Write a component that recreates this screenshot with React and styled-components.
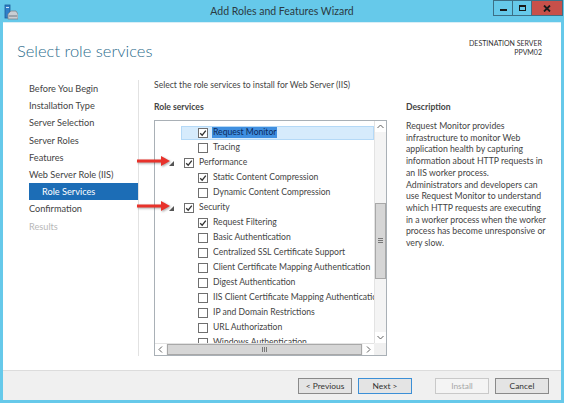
import styled, { createGlobalStyle } from "styled-components";

const GlobalStyle = createGlobalStyle`
  html, body { margin: 0; padding: 0; }
  body {
    width: 564px;
    height: 403px;
    overflow: hidden;
    background: #66c9ea;
    font-family: Lato, "Open Sans", sans-serif;
  }
`;

const steps = [
  { label: "Before You Begin" },
  { label: "Installation Type" },
  { label: "Server Selection" },
  { label: "Server Roles" },
  { label: "Features" },
  { label: "Web Server Role (IIS)" },
  { label: "Role Services", active: true, sub: true },
  { label: "Confirmation" },
  { label: "Results", disabled: true },
];

const services = [
  { label: "Request Monitor", level: 2, checked: true, selected: true },
  { label: "Tracing", level: 2 },
  { label: "Performance", level: 1, checked: true, parent: true },
  { label: "Static Content Compression", level: 2, checked: true },
  { label: "Dynamic Content Compression", level: 2 },
  { label: "Security", level: 1, checked: true, parent: true },
  { label: "Request Filtering", level: 2, checked: true },
  { label: "Basic Authentication", level: 2 },
  { label: "Centralized SSL Certificate Support", level: 2 },
  { label: "Client Certificate Mapping Authentication", level: 2 },
  { label: "Digest Authentication", level: 2 },
  { label: "IIS Client Certificate Mapping Authentication", level: 2 },
  { label: "IP and Domain Restrictions", level: 2 },
  { label: "URL Authorization", level: 2 },
  { label: "Windows Authentication", level: 2 },
];

// description is laid out the way the dialog wraps it
const description = [
  "Request Monitor provides",
  "infrastructure to monitor Web",
  "application health by capturing",
  "information about HTTP requests in",
  "an IIS worker process.",
  "Administrators and developers can",
  "use Request Monitor to understand",
  "which HTTP requests are executing",
  "in a worker process when the worker",
  "process has become unresponsive or",
  "very slow.",
];

const ServerIcon = () => (
  <svg width="14" height="16" viewBox="0 0 14 16">
    <rect x="1" y="1" width="5" height="13" fill="#2f7fc8" stroke="#1d5c99" strokeWidth="0.8" />
    <rect x="2" y="3" width="3" height="1" fill="#cfe6fa" />
    <path d="M4 10 L7 7 H12 L14 10 V15 H4 Z" fill="#c9ced3" stroke="#7d868e" strokeWidth="0.8" />
    <rect x="5" y="11" width="8" height="2" fill="#9aa3ab" />
  </svg>
);

const Check = () => (
  <svg width="8" height="8" viewBox="0 0 8 8">
    <path d="M1.2 4.2 L3.2 6.2 L6.8 1.6" fill="none" stroke="#333" strokeWidth="1.3" />
  </svg>
);

const Arrow = ({ top }) => (
  <ArrowMark style={{ top }} width="36" height="12" viewBox="0 0 36 12">
    <rect x="0" y="4.5" width="26" height="3" fill="#e8322b" />
    <path d="M24 1 L33 6 L24 11 Z" fill="#e8322b" />
  </ArrowMark>
);

export default function App() {
  return (
    <>
      <GlobalStyle />
      <Window>
        <TitleBar>
          <IconSlot>
            <ServerIcon />
          </IconSlot>
          <Title>Add Roles and Features Wizard</Title>
          <Controls>
            <CtrlButton>
              <MinGlyph />
            </CtrlButton>
            <CtrlButton>
              <MaxGlyph />
            </CtrlButton>
            <CtrlButton close>
              <svg width="8" height="7" viewBox="0 0 8 7">
                <path d="M1 0.5 L7 6.5 M7 0.5 L1 6.5" stroke="#1a1a1a" strokeWidth="1.8" />
              </svg>
            </CtrlButton>
          </Controls>
        </TitleBar>

        <Client>
          <Header>
            <PageTitle>Select role services</PageTitle>
            <Destination>
              <div>DESTINATION SERVER</div>
              <div>PPVM02</div>
            </Destination>
          </Header>

          <Main>
            <Nav>
              {steps.map((s) => (
                <NavItem key={s.label} active={s.active} sub={s.sub} disabled={s.disabled}>
                  {s.label}
                </NavItem>
              ))}
            </Nav>

            <Content>
              <Intro>Select the role services to install for Web Server (IIS)</Intro>
              <Columns>
                <TreeColumn>
                  <Label>Role services</Label>
                  <TreeBox>
                    <TreeList>
                      {services.map((s) => (
                        <Row key={s.label} level={s.level}>
                          <Expander>{s.parent && <Triangle />}</Expander>
                          <RowBody selected={s.selected}>
                            <CheckBox>{s.checked && <Check />}</CheckBox>
                            <RowText selected={s.selected}>{s.label}</RowText>
                          </RowBody>
                        </Row>
                      ))}
                    </TreeList>
                    <VScroll>
                      <ScrollBtn>
                        <svg width="7" height="5" viewBox="0 0 7 5">
                          <path d="M0.5 4 L3.5 1 L6.5 4" fill="none" stroke="#606060" strokeWidth="1" />
                        </svg>
                      </ScrollBtn>
                      <VTrack>
                        <VThumb>
                          <Grip vertical />
                        </VThumb>
                      </VTrack>
                      <ScrollBtn>
                        <svg width="7" height="5" viewBox="0 0 7 5">
                          <path d="M0.5 1 L3.5 4 L6.5 1" fill="none" stroke="#606060" strokeWidth="1" />
                        </svg>
                      </ScrollBtn>
                    </VScroll>
                    <HScroll>
                      <ScrollBtn>
                        <svg width="5" height="7" viewBox="0 0 5 7">
                          <path d="M4 0.5 L1 3.5 L4 6.5" fill="none" stroke="#606060" strokeWidth="1" />
                        </svg>
                      </ScrollBtn>
                      <HThumb>
                        <Grip />
                      </HThumb>
                      <ScrollBtn>
                        <svg width="5" height="7" viewBox="0 0 5 7">
                          <path d="M1 0.5 L4 3.5 L1 6.5" fill="none" stroke="#606060" strokeWidth="1" />
                        </svg>
                      </ScrollBtn>
                    </HScroll>
                    <Corner />
                  </TreeBox>
                </TreeColumn>

                <DescColumn>
                  <Label>Description</Label>
                  <DescText>
                    {description.map((line) => (
                      <DescLine key={line}>{line}</DescLine>
                    ))}
                  </DescText>
                </DescColumn>
              </Columns>
            </Content>

            <Arrow top={75} />
            <Arrow top={120} />
          </Main>

          <Footer>
            <Button>&lt; Previous</Button>
            <Button primary>Next &gt;</Button>
            <Button disabled spaced>
              Install
            </Button>
            <Button>Cancel</Button>
          </Footer>
        </Client>
      </Window>
    </>
  );
}

const Window = styled.div`
  width: 564px;
  height: 403px;
  box-sizing: border-box;
  padding: 0 3px 3px 3px;
  display: flex;
  flex-direction: column;
  background: #66c9ea;
`;

const TitleBar = styled.div`
  height: 22px;
  flex: none;
  display: grid;
  grid-template-columns: 1fr auto 1fr;
  align-items: start;
`;

const IconSlot = styled.div`
  padding-top: 4px;
  padding-left: 1px;
  line-height: 0;
`;

const Title = styled.div`
  padding-top: 5px;
  font-size: 10.5px;
  color: #2b3a42;
`;

const Controls = styled.div`
  justify-self: end;
  margin-right: -2px;
  display: flex;
`;

const CtrlButton = styled.div`
  width: ${(p) => (p.close ? "32px" : "20px")};
  height: 16px;
  box-sizing: border-box;
  border: 1px solid #3c6f86;
  margin-left: -1px;
  background: ${(p) => (p.close ? "#c7504a" : "#66c9ea")};
  display: flex;
  align-items: center;
  justify-content: center;
`;

const MinGlyph = styled.div`
  width: 7px;
  height: 2px;
  background: #1a1a1a;
  margin-top: 4px;
`;

const MaxGlyph = styled.div`
  width: 7px;
  height: 6px;
  box-sizing: border-box;
  border: 1px solid #1a1a1a;
  border-top-width: 2px;
`;

const Client = styled.div`
  flex: 1;
  min-height: 0;
  display: flex;
  flex-direction: column;
  background: #fff;
  border-top: 1px solid #d9eef6;
`;

const Header = styled.div`
  height: 57px;
  flex: none;
  display: flex;
  justify-content: space-between;
  box-sizing: border-box;
  padding: 16px 19px 0 14px;
`;

const PageTitle = styled.div`
  font-size: 16.5px;
  font-weight: 300;
  color: #2c6c8c;
  line-height: 24px;
`;

const Destination = styled.div`
  text-align: right;
  font-size: 7px;
  line-height: 9px;
  color: #333;
`;

const Main = styled.div`
  flex: 1;
  min-height: 0;
  display: flex;
  position: relative;
  padding-bottom: 14px;
`;

const Nav = styled.div`
  width: 136px;
  flex: none;
  box-sizing: border-box;
  padding-left: 26px;
  border-right: 1px solid #e2e2e2;
`;

const NavItem = styled.div`
  height: 17.2px;
  line-height: 17px;
  font-size: 9.2px;
  padding-left: ${(p) => (p.sub ? "13px" : "0")};
  color: ${(p) => (p.active ? "#fff" : p.disabled ? "#b8b8b8" : "#444")};
  background: ${(p) => (p.active ? "#1c6db6" : "transparent")};
`;

const Content = styled.div`
  flex: 1;
  min-height: 0;
  padding-left: 15px;
  display: flex;
  flex-direction: column;
`;

const Intro = styled.div`
  font-size: 8.6px;
  line-height: 11px;
  color: #444;
`;

const Columns = styled.div`
  flex: 1;
  min-height: 0;
  display: flex;
  gap: 19px;
  margin-top: 10px;
`;

const TreeColumn = styled.div`
  width: 233px;
  flex: none;
  min-height: 0;
  display: flex;
  flex-direction: column;
`;

const Label = styled.div`
  font-size: 8.6px;
  font-weight: 700;
  color: #444;
  line-height: 12px;
  margin-bottom: 7px;
`;

const TreeBox = styled.div`
  flex: 1;
  display: grid;
  grid-template-columns: 1fr 12px;
  grid-template-rows: minmax(0, 1fr) 12px;
  border: 1px solid #a9b0b6;
  min-height: 0;
`;

const TreeList = styled.div`
  padding-top: 4px;
  overflow: hidden;
  min-height: 0;
`;

const Row = styled.div`
  height: 15px;
  display: flex;
  align-items: center;
  padding-left: ${(p) => (p.level === 1 ? "12px" : "26px")};
  white-space: nowrap;
`;

const Expander = styled.div`
  width: 17px;
  flex: none;
  display: flex;
  align-items: center;
`;

const Triangle = styled.div`
  margin-left: 2px;
  margin-top: 2px;
  width: 0;
  height: 0;
  border-left: 5px solid transparent;
  border-bottom: 5px solid #555;
`;

const RowBody = styled.div`
  flex: 1;
  height: 14px;
  display: flex;
  align-items: center;
  margin-left: ${(p) => (p.selected ? "-17px" : "0")};
  padding-left: ${(p) => (p.selected ? "17px" : "0")};
  background: ${(p) => (p.selected ? "#d6ebfc" : "transparent")};
  box-shadow: ${(p) => (p.selected ? "inset 0 0 0 1px #b4d9f7" : "none")};
`;

const CheckBox = styled.div`
  width: 10px;
  height: 10px;
  flex: none;
  box-sizing: border-box;
  border: 1px solid #6f6f6f;
  background: #fff;
  display: flex;
  align-items: center;
  justify-content: center;
  margin-right: 4px;
`;

const RowText = styled.span`
  font-size: 8.6px;
  line-height: 11px;
  color: ${(p) => (p.selected ? "#0d2a5c" : "#444")};
  background: ${(p) => (p.selected ? "#3f8fe0" : "transparent")};
  padding: 0 1px;
`;

const VScroll = styled.div`
  grid-row: 1;
  grid-column: 2;
  min-height: 0;
  display: flex;
  flex-direction: column;
  background: #f4f4f4;
  border-left: 1px solid #e3e3e3;
`;

const ScrollBtn = styled.div`
  width: 11px;
  height: 11px;
  flex: none;
  display: flex;
  align-items: center;
  justify-content: center;
  background: #fff;
`;

const VTrack = styled.div`
  flex: 1;
  min-height: 0;
  padding-top: 71px;
`;

const VThumb = styled.div`
  height: 76px;
  box-sizing: border-box;
  border: 1px solid #a8a8a8;
  background: #d6d6d6;
  display: flex;
  align-items: center;
  justify-content: center;
`;

const HScroll = styled.div`
  grid-row: 2;
  grid-column: 1;
  display: flex;
  background: #f4f4f4;
  border-top: 1px solid #e3e3e3;
`;

const HThumb = styled.div`
  flex: 1;
  margin: 0 1px;
  box-sizing: border-box;
  border: 1px solid #a8a8a8;
  background: #d6d6d6;
  display: flex;
  align-items: center;
  justify-content: center;
`;

const Grip = styled.div`
  width: ${(p) => (p.vertical ? "5px" : "6px")};
  height: ${(p) => (p.vertical ? "6px" : "5px")};
  background: repeating-linear-gradient(
    ${(p) => (p.vertical ? "180deg" : "90deg")},
    #777 0 1px,
    transparent 1px 2px
  );
`;

const Corner = styled.div`
  grid-row: 2;
  grid-column: 2;
  background: #f0f0f0;
`;

const DescColumn = styled.div`
  width: 146px;
  flex: none;
`;

const DescText = styled.div`
  margin-top: 5px;
  font-size: 8.7px;
  line-height: 11.7px;
  color: #444;
`;

const DescLine = styled.div`
  white-space: nowrap;
`;

const ArrowMark = styled.svg`
  position: absolute;
  left: 134px;
  filter: drop-shadow(1px 1px 1px rgba(0, 0, 0, 0.35));
`;

const Footer = styled.div`
  height: 30px;
  flex: none;
  box-sizing: border-box;
  border-top: 1px solid #dcdcdc;
  background: #f0f0f0;
  display: flex;
  justify-content: flex-end;
  align-items: flex-start;
  padding: 7px 12px 0 0;
  gap: 6px;
`;

const Button = styled.div`
  width: 54px;
  height: 16px;
  box-sizing: border-box;
  margin-left: ${(p) => (p.spaced ? "17px" : "0")};
  border: 1px solid ${(p) => (p.primary ? "#3c8fd6" : p.disabled ? "#c9c9c9" : "#8a8a8a")};
  background: ${(p) => (p.disabled ? "#f4f4f4" : "#e4e4e4")};
  color: ${(p) => (p.disabled ? "#a8a8a8" : "#333")};
  font-size: 8.4px;
  line-height: 14px;
  text-align: center;
`;
